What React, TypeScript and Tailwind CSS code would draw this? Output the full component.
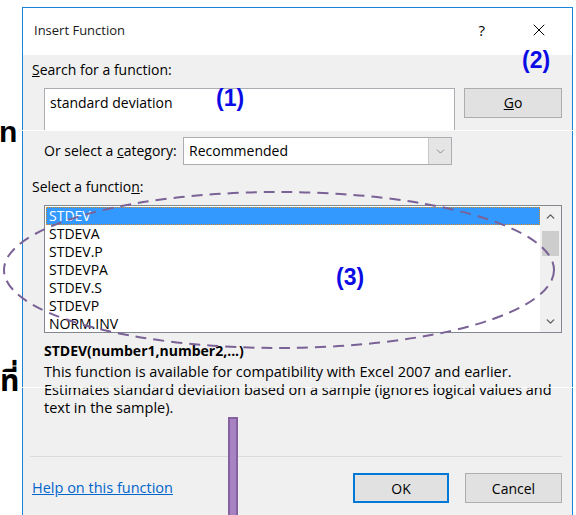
import { ChevronDown, ChevronUp, X } from 'lucide-react';

const ui = { fontFamily: '"Open Sans", "Noto Sans", sans-serif' };
const callout = { fontFamily: '"Liberation Sans", Arial, sans-serif' };

const functions = ['STDEV', 'STDEVA', 'STDEV.P', 'STDEVPA', 'STDEV.S', 'STDEVP', 'NORM.INV'];

function Callout({ label, className }: { label: string; className: string }) {
  return (
    <div style={callout} className={`absolute text-[23px] font-bold leading-none text-[#0b0be6] ${className}`}>
      {label}
    </div>
  );
}

function FunctionList() {
  return (
    <div className="ml-[12px] mt-[9px] flex h-[128px] w-[518px] border border-[#828790] bg-white">
      <div className="flex-1 overflow-hidden pt-px pl-px">
        {functions.map((name, i) => (
          <div
            key={name}
            className={
              i === 0
                ? 'h-[18px] border border-dotted border-[#d48a2e] bg-[#3399ff] pl-[2px] leading-[16px] text-white'
                : 'h-[18px] pl-[3px] leading-[18px] text-black'
            }
          >
            {name}
          </div>
        ))}
      </div>
      <div className="flex w-[21px] flex-col bg-[#f0f0f0]">
        <div className="flex h-[21px] items-center justify-center text-[#606060]">
          <ChevronUp size={13} strokeWidth={2.6} />
        </div>
        <div className="mx-[2px] mt-[4px] h-[25px] bg-[#cdcdcd]" />
        <div className="flex-1" />
        <div className="flex h-[21px] items-center justify-center text-[#606060]">
          <ChevronDown size={13} strokeWidth={2.6} />
        </div>
      </div>
    </div>
  );
}

export default function App() {
  return (
    <div style={ui} className="relative h-[515px] w-[576px] overflow-hidden bg-white text-[14px] text-black">
      {/* the Insert Function dialog */}
      <div className="ml-[22px] mt-[7px] h-[520px] w-[551px] border border-b-0 border-[#1883d7]">
        <div className="flex h-[47px] items-start bg-white pl-[11px] pt-[13px] text-[13px] leading-[18px]">
          <span className="flex-1 text-[#1a1a1a]">Insert Function</span>
          <span className="mr-[44px] text-[15px]">?</span>
          <X size={20} strokeWidth={1.2} className="mr-[23px] -mt-px" />
        </div>

        <div className="h-full bg-[#f0f0f0] pl-[9px] pr-[10px] pt-[6px]">
          <div className="leading-[18px]">
            <span className="underline">S</span>earch for a function:
          </div>
          <div className="mt-[9px] flex items-start">
            <div className="ml-[12px] h-[43px] w-[411px] border border-b-0 border-[#abadb3] bg-white pl-[5px] pt-[5px] leading-[18px]">
              standard deviation
            </div>
            <button className="ml-[9px] h-[30px] w-[98px] border border-[#adadad] bg-[#e1e1e1] leading-[18px]">
              <span className="underline">G</span>o
            </button>
          </div>

          <div className="ml-[12px] mt-[6px] flex items-center">
            <span className="w-[139px] leading-[18px]">
              Or select a <span className="underline">c</span>ategory:
            </span>
            <div className="flex h-[28px] w-[269px] border border-[#abadb3] bg-white">
              <span className="flex-1 pl-[5px] leading-[26px]">Recommended</span>
              <div className="flex w-[23px] items-center justify-center border-l border-[#c8c8c8] bg-[#e5e5e5] text-[#707070]">
                <ChevronDown size={13} strokeWidth={1.4} />
              </div>
            </div>
          </div>

          <div className="mt-[13px] leading-[18px]">
            Select a functio<span className="underline">n</span>:
          </div>
          <FunctionList />

          <div className="ml-[12px] mt-[9px] font-bold leading-[18px]">STDEV(number1,number2,...)</div>
          <div className="ml-[12px] mt-[3px] text-[14.5px] leading-[18px]">
            This function is available for compatibility with Excel 2007 and earlier.
            <br />
            Estimates standard deviation based on a sample (ignores logical values and
            <br />
            text in the sample).
          </div>

          <div className="ml-[-2px] mt-[39px] h-px w-[532px] bg-[#dcdcdc]" />

          <div className="mt-[16px] flex items-center">
            <a className="flex-1 text-[14.5px] text-[#0066cc] underline">Help on this function</a>
            <button className="h-[30px] w-[96px] border-2 border-[#0078d7] bg-[#e1e1e1]">OK</button>
            <button className="ml-[16px] h-[30px] w-[97px] border border-[#adadad] bg-[#e1e1e1]">Cancel</button>
          </div>
        </div>
      </div>

      {/* seams where the capture was spliced */}
      <div className="absolute left-[22px] right-0 top-[130px] h-px bg-white" />
      <div className="absolute left-[22px] right-0 top-[387px] h-px bg-white/90" />

      {/* page text peeking out behind the dialog */}
      <div style={callout} className="absolute left-[-1px] top-[117px] text-[30px] font-bold leading-none">
        n
      </div>
      <div
        style={{ fontFamily: '"Noto Sans Thai", "Noto Sans", "DejaVu Sans", sans-serif' }}
        className="absolute left-0 top-[362px] text-[30px] font-bold leading-[40px]"
      >
        ที่
      </div>

      {/* annotations */}
      <Callout label="(1)" className="left-[216px] top-[87px]" />
      <Callout label="(2)" className="left-[522px] top-[49px]" />
      <Callout label="(3)" className="left-[336px] top-[266px]" />

      <svg className="pointer-events-none absolute left-0 top-0" width="576" height="515">
        <ellipse
          cx="279"
          cy="270"
          rx="275"
          ry="78"
          fill="none"
          stroke="#7a6196"
          strokeWidth="2"
          strokeDasharray="11 7"
        />
      </svg>

      <div className="absolute left-[228px] top-[417px] h-[100px] w-[10px] border-2 border-[#85619f] bg-[#a783c4]" />
    </div>
  );
}
